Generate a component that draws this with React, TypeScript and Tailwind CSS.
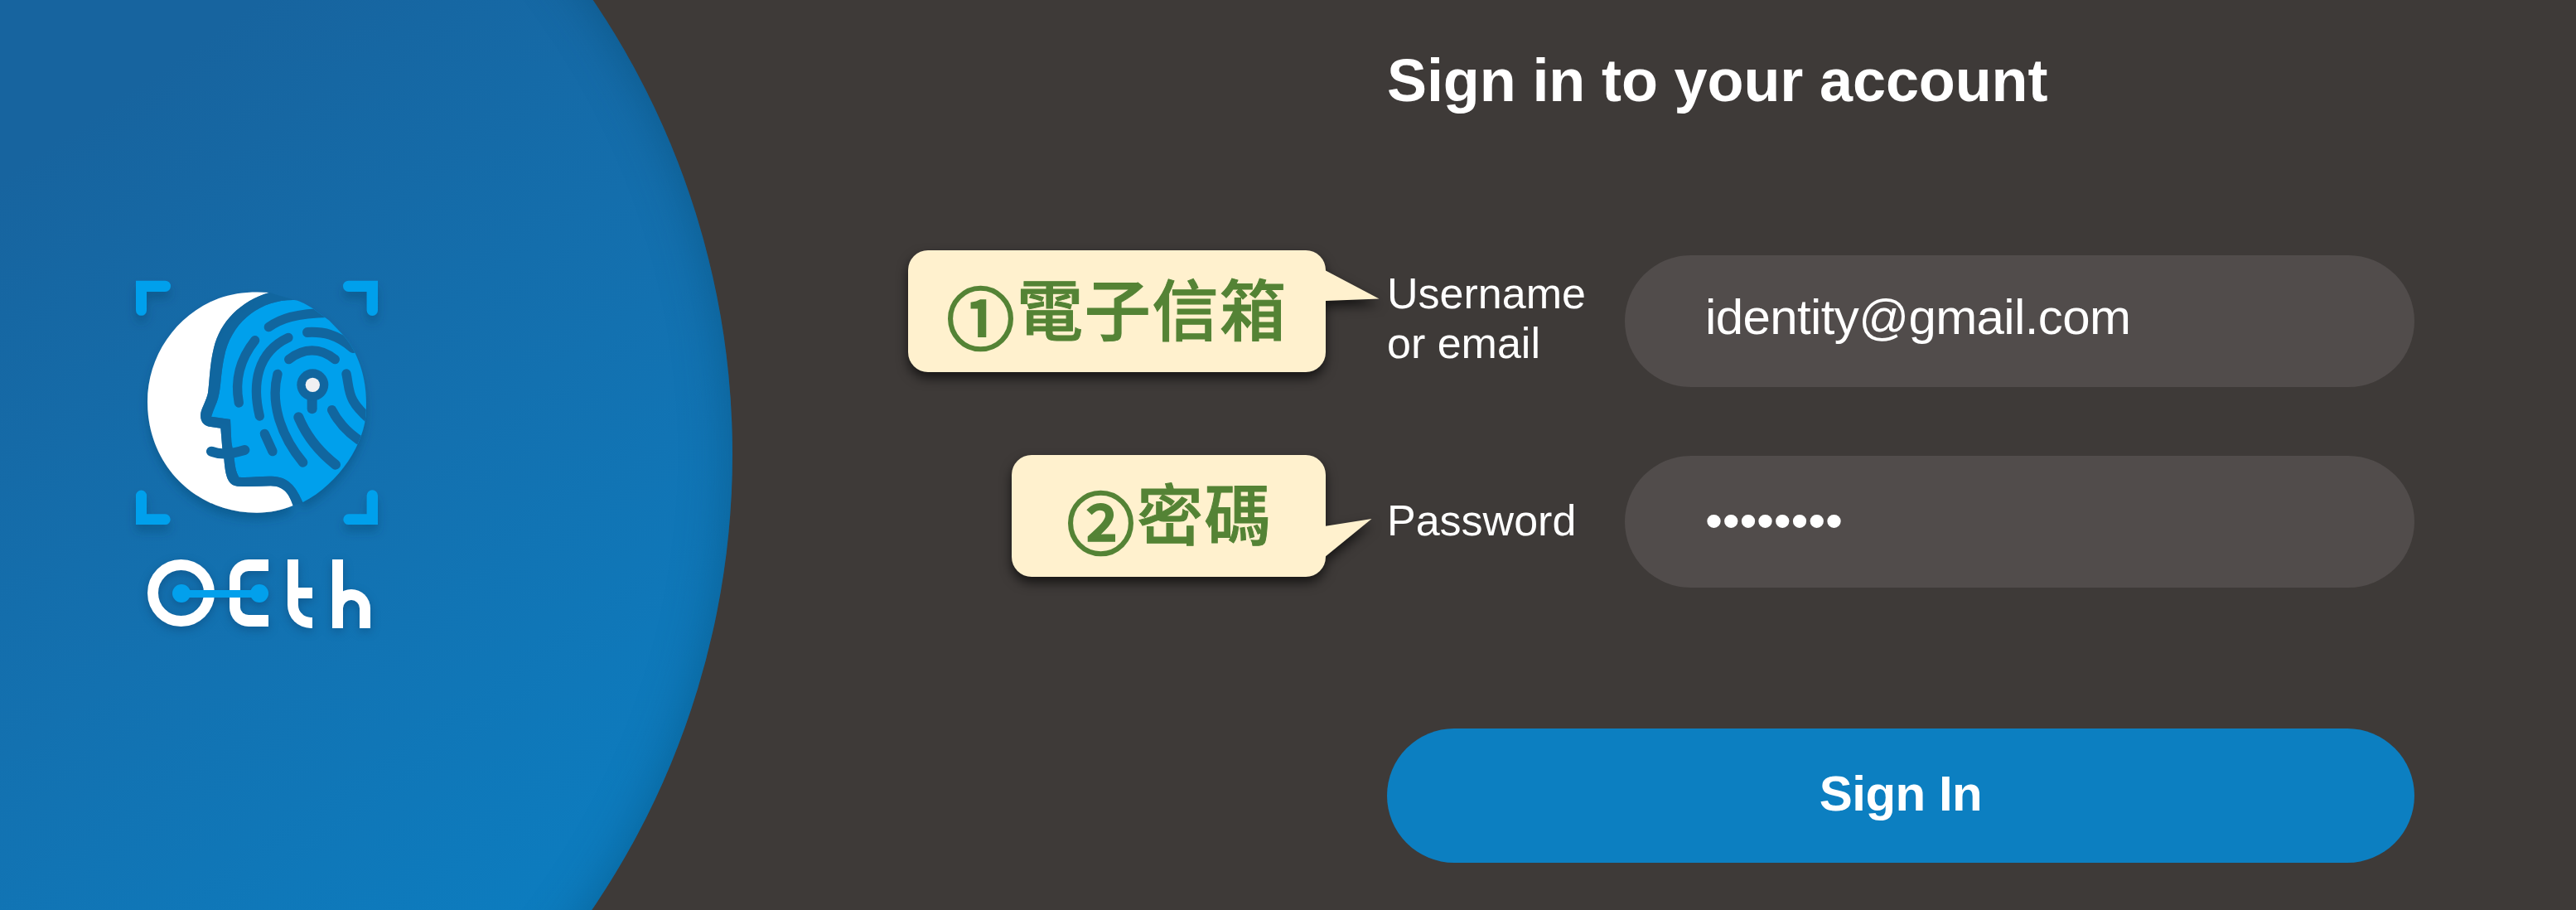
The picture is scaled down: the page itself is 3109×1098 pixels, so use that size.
import React from "react";

const DARK = "#11669f";
const SKY = "#02a0ec";

const HEAD =
  "M645 126C530 124 430 195 397 310C377 390 382 440 370 480C365 500 353 522 345 548L414 558L418 640L428 700C431 725 433 745 445 767C490 770 530 762 575 765C630 770 655 810 676 858C810 790 903 640 905 530C912 430 885 320 818 248L772 200L712 156C692 145 670 129 645 126Z";

/* Viewfinder frame around a crescent and a fingerprint-patterned profile. */
function Emblem() {
  return (
    <svg viewBox="0 0 1020 990" className="block h-[330px] w-[340px] overflow-visible" fill="none">
      <defs>
        <filter id="soft" x="-20%" y="-20%" width="140%" height="150%">
          <feDropShadow dx="0" dy="24" stdDeviation="18" floodColor="#0a3c66" floodOpacity="0.38" />
        </filter>
        <clipPath id="head">
          <path d={HEAD} />
        </clipPath>
      </defs>
      <g filter="url(#soft)">
        <g fill={SKY}>
          <path d="M72 56H178a20 20 0 0 1 0 40H111V163a19.500 19.500 0 0 1-39 0Z" />
          <path d="M948 56H842a20 20 0 0 0 0 40H908V163a20 20 0 0 0 40 0Z" />
          <path d="M72 939H178a19 19 0 0 0 0-38H111V834a19.500 19.500 0 0 0-39 0Z" />
          <path d="M948 939H842a19 19 0 0 1 0-38H908V834a20 20 0 0 1 40 0Z" />
        </g>
        <path
          fill="#fff"
          d="M555 99C490 94 425 100 372 120C215 180 114 330 114 495C114 720 285 896 510 896C555 896 600 887 641 870C628 832 610 799 560 799C520 800 480 803 440 800C405 797 396 765 391 700L385 664L379 590L343 585C315 582 303 562 307 535C311 515 327 490 333 462C339 420 339 360 354 300C377 205 450 130 555 99Z"
        />
        <path fill={SKY} d={HEAD} />
      </g>
      <path
        fill={DARK}
        d="M555 99C450 130 377 205 354 300C339 360 339 420 333 462C327 490 311 515 307 535C303 562 315 582 343 585L379 590L385 664L391 700C396 765 405 797 440 800C480 803 520 800 560 799C610 799 628 832 641 870L676 858C655 810 630 770 575 765C530 762 490 770 445 767C433 745 431 725 428 700L418 640L414 558L345 548C353 522 365 500 370 480C382 440 377 390 397 310C430 195 530 124 645 126Z"
        opacity="0.9"
      />
      <g clipPath="url(#head)" stroke={DARK} strokeLinecap="round" strokeLinejoin="round" strokeWidth="34">
        <path d="M553 224C595 194 650 174 770 172" />
        <path d="M693 243C750 240 800 250 858 300" strokeWidth="36" />
        <path d="M503 272C445 345 430 420 445 498" />
        <path d="M624 262C510 315 492 430 520 546" />
        <path d="M585 394C560 490 590 610 677 714" />
        <path d="M538 610L567 674" />
        <path d="M626 341C680 298 740 298 793 341" />
        <path d="M834 393C848 460 835 490 930 568" />
        <path d="M782 524C805 570 840 612 910 652" />
        <path d="M661 550C690 620 735 675 795 722" strokeWidth="36" />
        <path d="M710 470V520" strokeWidth="36" />
      </g>
      <path d="M345 674C380 688 415 684 466 669" stroke={DARK} strokeWidth="36" strokeLinecap="round" />
      <circle cx="712" cy="433" r="57" fill={DARK} />
      <circle cx="712" cy="433" r="26" fill="#f0f0f2" />
    </svg>
  );
}

/* Wordmark assembled from bordered boxes. */
function Wordmark() {
  return (
    <div
      role="img"
      aria-label="OEth"
      className="relative ml-[38px] flex h-[84px] items-start drop-shadow-[0_4px_6px_rgba(8,50,90,0.35)]"
    >
      <div className="size-[81px] rounded-full border-[13.500px] border-white" />
      <div className="ml-[18px] h-[81px] w-[47px] rounded-l-[23px] border-y-[14px] border-l-[13px] border-white" />
      <div className="ml-[23px] flex h-[83px] w-[30px] flex-col rounded-bl-[28px] border-b-[13px] border-l-[13px] border-white">
        <div className="mt-[34px] h-[13px] bg-white" />
      </div>
      <div className="ml-[24px] flex h-[83px] w-[46px] items-end">
        <div className="h-full w-[13px] shrink-0 bg-white" />
        <div className="-ml-[13px] h-[47px] w-[46px] shrink-0 rounded-t-[23px] border-x-[13px] border-t-[13px] border-white" />
      </div>
      <div className="absolute left-[30px] top-[30px] flex h-[22px] w-[116px] items-center justify-between">
        <div className="size-[22px] rounded-full bg-[#02a0ec]" />
        <div className="-mx-1 h-[9px] flex-1 bg-[#02a0ec]" />
        <div className="size-[22px] rounded-full bg-[#02a0ec]" />
      </div>
    </div>
  );
}

function Callout({
  num,
  text,
  size,
  points,
}: {
  num: string;
  text: string;
  size: string;
  points: string;
}) {
  return (
    <div
      className={`relative flex h-[147px] rounded-[24px] bg-[#fff1ce] text-[#548335] drop-shadow-[0_7px_7px_rgba(0,0,0,0.65)] ${size}`}
    >
      <span className="mt-[28px] w-[84px] font-['Noto_Sans_CJK_TC',sans-serif] text-[81px] font-normal leading-[100px] [-webkit-text-stroke:3.500px_#548335]">
        {num}
      </span>
      <span className="mt-[17px] whitespace-nowrap font-['Noto_Sans_CJK_TC',sans-serif] text-[80px] font-medium leading-[100px] tracking-[1.700px] [-webkit-text-stroke:1px_#548335]">
        {text}
      </span>
      <svg className="absolute left-full top-0 h-[147px] w-[66px]" viewBox="0 0 66 147">
        <polygon points={points} fill="#fff1ce" />
      </svg>
    </div>
  );
}

export default function App() {
  return (
    <main className="flex h-[1098px] w-[3109px] overflow-hidden bg-[#3e3a38] font-['Liberation_Sans',sans-serif] text-white">
      <aside className="grid h-full w-[884px] shrink-0 overflow-hidden">
        <div className="col-start-1 row-start-1 -ml-[1068px] -mt-[428px] size-[1952px] rounded-full bg-[linear-gradient(145deg,#17649f_42%,#1371b0_63%,#0c7dc0_84%)] shadow-[inset_0_0_60px_rgba(0,60,90,0.4)]" />
        <div className="col-start-1 row-start-1 pl-[140px] pt-[320px]">
          <Emblem />
          <div className="pt-[25px]">
            <Wordmark />
          </div>
        </div>
      </aside>

      <div className="flex w-[716px] shrink-0 flex-col items-end gap-[100px] pt-[302px]">
        <Callout num="①" text="電子信箱" size="w-[504px] pl-[47px]" points="-1,24 64.500,58.500 -1,61" />
        <Callout num="②" text="密碼" size="w-[379px] pl-[67px]" points="-1,86 55.500,77 -1,123" />
      </div>

      <form className="ml-[74px] w-[1240px] shrink-0 pt-[56px]">
        <h1 className="h-[252px] text-[72px] font-bold leading-[82px] tracking-[-0.120px]">Sign in to your account</h1>
        <div className="flex h-[159px] items-center justify-between">
          <label className="mb-[8px] w-[260px] text-[52px] leading-[60px]">
            Username
            <br />
            or email
          </label>
          <div className="flex h-[159px] w-[953px] items-center rounded-full bg-[#514c4b] pb-[9px] pl-[97px] text-[60px] tracking-[-0.620px]">
            identity@gmail.com
          </div>
        </div>
        <div className="mt-[83px] flex h-[159px] items-center justify-between">
          <label className="mb-[4px] w-[260px] text-[52px] leading-[60px]">Password</label>
          <div className="flex h-[159px] w-[953px] items-center rounded-full bg-[#514c4b] pb-[2px] pl-[97px] text-[60px] tracking-[-0.300px]">
            ••••••••
          </div>
        </div>
        <button
          type="button"
          className="mt-[170px] flex h-[162px] w-full items-center justify-center rounded-full bg-[#0c7fc1] pb-[4px] text-[60px] font-bold tracking-[-0.500px]"
        >
          Sign In
        </button>
      </form>
    </main>
  );
}
